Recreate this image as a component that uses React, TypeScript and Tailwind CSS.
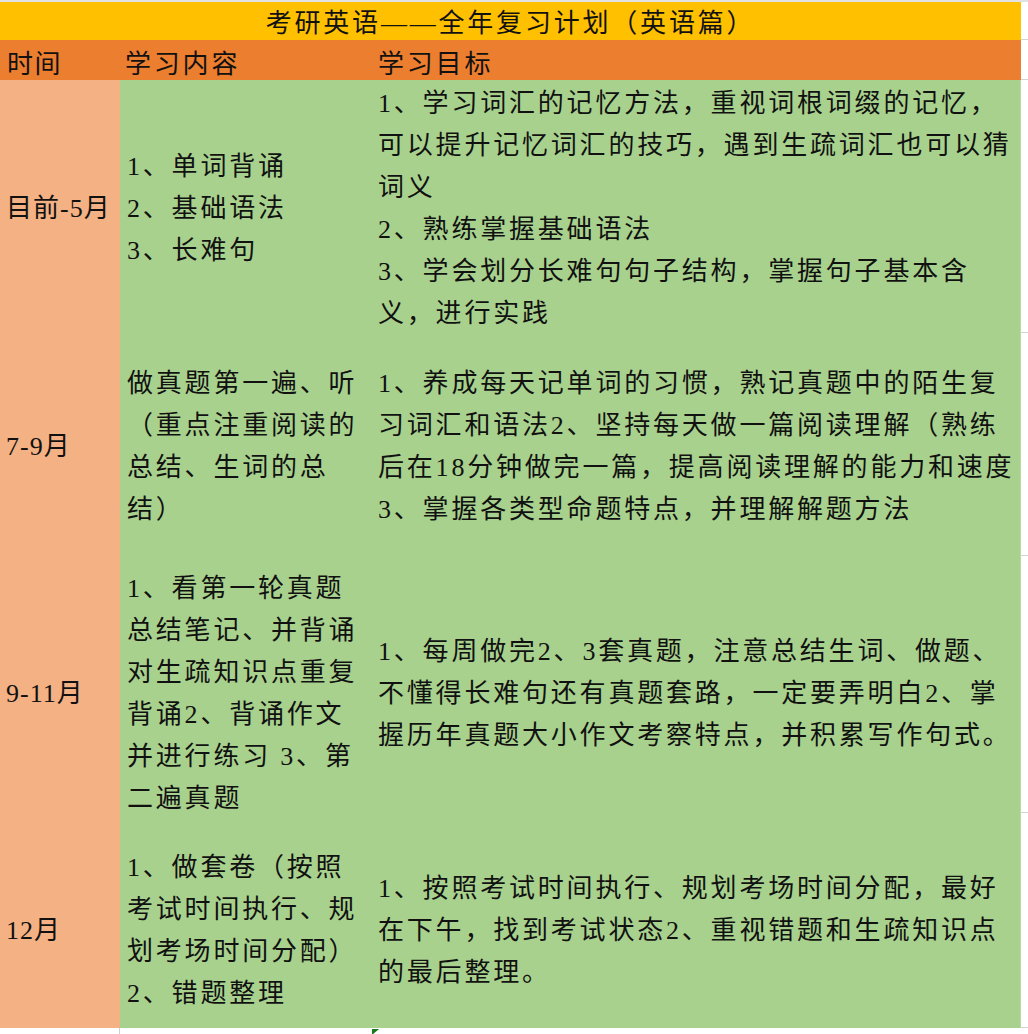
import React from "react"

const font = { fontFamily: '"Liberation Serif", "Noto Sans CJK SC", serif' }

type Row = {
  time: string
  content: string[]
  goal: string[]
  h: string
  pt: string
}

const rows: Row[] = [
  {
    time: "目前-5月",
    content: ["1、单词背诵", "2、基础语法", "3、长难句"],
    goal: [
      "1、学习词汇的记忆方法，重视词根词缀的记忆，",
      "可以提升记忆词汇的技巧，遇到生疏词汇也可以猜",
      "词义",
      "2、熟练掌握基础语法",
      "3、学会划分长难句句子结构，掌握句子基本含",
      "义，进行实践",
    ],
    h: "h-[253px]",
    pt: "pt-[4px]",
  },
  {
    time: "7-9月",
    content: ["做真题第一遍、听", "（重点注重阅读的", "总结、生词的总", "结）"],
    goal: [
      "1、养成每天记单词的习惯，熟记真题中的陌生复",
      "习词汇和语法2、坚持每天做一篇阅读理解（熟练",
      "后在18分钟做完一篇，提高阅读理解的能力和速度",
      "3、掌握各类型命题特点，并理解解题方法",
    ],
    h: "h-[223px]",
    pt: "pt-[4px]",
  },
  {
    time: "9-11月",
    content: [
      "1、看第一轮真题",
      "总结笔记、并背诵",
      "对生疏知识点重复",
      "背诵2、背诵作文",
      "并进行练习 3、第",
      "二遍真题",
    ],
    goal: [
      "1、每周做完2、3套真题，注意总结生词、做题、",
      "不懂得长难句还有真题套路，一定要弄明白2、掌",
      "握历年真题大小作文考察特点，并积累写作句式。",
    ],
    h: "h-[257px]",
    pt: "pt-[18px]",
  },
  {
    time: "12月",
    content: ["1、做套卷（按照", "考试时间执行、规", "划考场时间分配）", "2、错题整理"],
    goal: [
      "1、按照考试时间执行、规划考场时间分配，最好",
      "在下午，找到考试状态2、重视错题和生疏知识点",
      "的最后整理。",
    ],
    h: "h-[215px]",
    pt: "pt-[20px]",
  },
]

function Lines({ lines }: { lines: string[] }) {
  return (
    <div className="flex flex-col">
      {lines.map((l, i) => (
        <div key={i} className="whitespace-nowrap leading-[42px]">
          {l}
        </div>
      ))}
    </div>
  )
}

export default function App() {
  return (
    <div
      className="w-[1028px] h-[1034px] bg-white text-[#111] text-[26px] tracking-[2.8px] overflow-hidden"
      style={font}
    >
      <div className="h-[2px] bg-[#e2e2e2]" />
      <div className="flex h-[38px]">
        <div className="w-[1021px] bg-[#ffc000] flex items-center justify-center leading-none pt-[5px]">
          考研英语——全年复习计划（英语篇）
        </div>
        <div className="flex-1 border-b border-[#d4d4d4]" />
      </div>
      <div className="flex h-[40px]">
        <div className="w-[1021px] bg-[#ec7e2f] flex items-center leading-none pt-[9px]">
          <div className="w-[120px] pl-[7px] tracking-[1.5px]">时间</div>
          <div className="w-[250px] pl-[5px]">学习内容</div>
          <div className="pl-[8px]">学习目标</div>
        </div>
        <div className="flex-1 border-b border-[#d4d4d4]" />
      </div>
      {rows.map((r, i) => (
        <div key={i} className={`flex ${r.h}`}>
          <div className={`w-[120px] bg-[#f4b183] flex items-center pl-[6px] ${r.pt} whitespace-nowrap tracking-[1px]`}>
            {r.time}
          </div>
          <div className={`w-[250px] bg-[#a9d18e] flex items-center pl-[7px] ${r.pt}`}>
            <Lines lines={r.content} />
          </div>
          <div className={`w-[651px] bg-[#a9d18e] flex items-center pl-[8px] ${r.pt} border-r border-[#b7dca0]`}>
            <Lines lines={r.goal} />
          </div>
          <div className="flex-1 border-b border-[#d4d4d4]" />
        </div>
      ))}
      <div className="relative flex h-[6px]">
        <div className="w-[120px] border-r border-[#d0d0d0]" />
        <div className="absolute left-[372px] top-[1px] w-0 h-0 border-t-[6px] border-t-[#1a7a1a] border-r-[7px] border-r-transparent" />
      </div>
    </div>
  )
}
